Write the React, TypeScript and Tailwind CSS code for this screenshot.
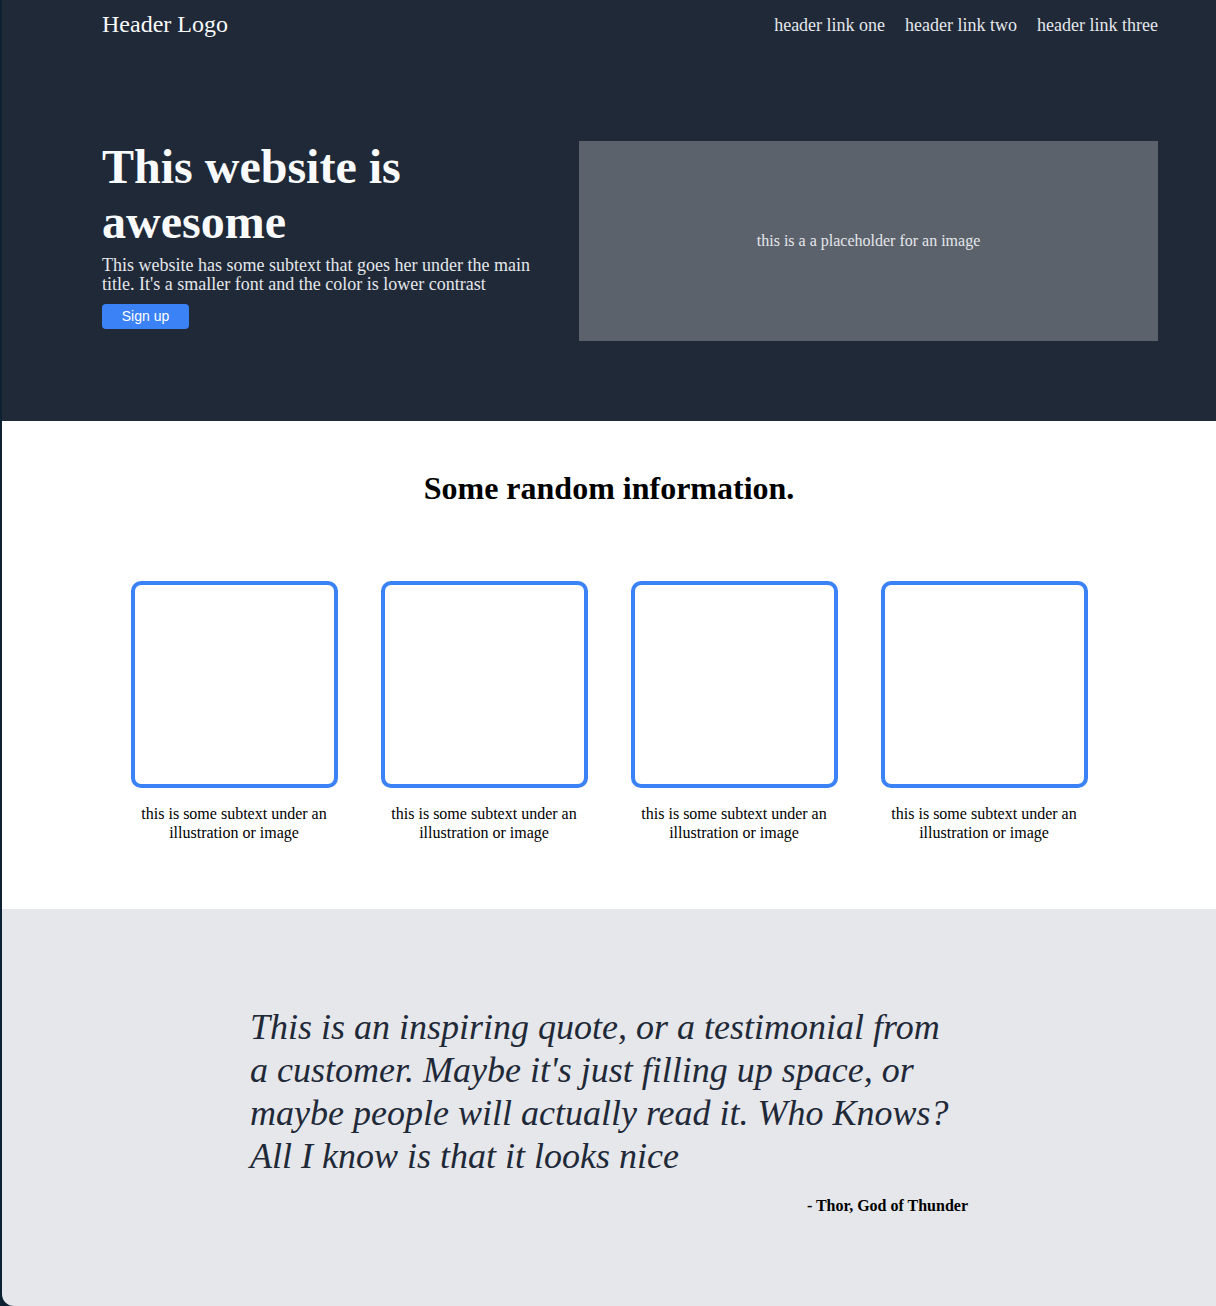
const serif = "font-['Liberation_Serif','Times_New_Roman',serif]";

const cards = [1, 2, 3, 4];

export default function App() {
  return (
    <div className={`min-h-[1306px] bg-[#0c2131] pl-[2px] ${serif}`}>
      <div className="overflow-hidden rounded-bl-[12px]">
        <section className="h-[421px] bg-[#1f2937] text-gray-50">
          <nav className="flex items-center justify-between pl-[100px] pr-[58px] pt-[8px]">
            <div className="text-[24px] leading-[32px]">Header Logo</div>
            <div className="flex gap-[20px] pt-[2px] text-[18px] text-gray-200">
              <a>header link one</a>
              <a>header link two</a>
              <a>header link three</a>
            </div>
          </nav>
          <div className="mt-[101px] flex items-start gap-[21px] pl-[100px] pr-[58px]">
            <div className="-mt-[2px] w-[456px]">
              <h1 className="text-[48px] font-bold leading-[55px]">This website is awesome</h1>
              <p className="mt-[7px] text-[18px] leading-[19px] text-gray-200">
                This website has some subtext that goes her under the main title. It's a smaller font and
                the color is lower contrast
              </p>
              <button className="mt-[10px] h-[25px] w-[87px] rounded-[4px] bg-[#3b82f6] font-['Liberation_Sans',Arial,sans-serif] text-[14px] font-medium text-white">
                Sign up
              </button>
            </div>
            <div className="flex h-[200px] flex-1 items-center justify-center bg-[#5b626c] text-[16px] text-gray-200">
              this is a a placeholder for an image
            </div>
          </div>
        </section>

        <section className="h-[488px] bg-white pt-[48px] text-black">
          <h2 className="text-center text-[32px] font-bold leading-[1.2]">Some random information.</h2>
          <div className="mt-[74px] flex justify-center gap-[43px]">
            {cards.map((c) => (
              <div key={c} className="w-[207px]">
                <div className="h-[207px] w-[207px] rounded-[10px] border-4 border-[#3b82f6]" />
                <p className="mt-[16px] px-2 text-center text-[16px] leading-[19px]">
                  this is some subtext under an illustration or image
                </p>
              </div>
            ))}
          </div>
        </section>

        <section className="h-[397px] bg-[#e5e7eb] pt-[97px]">
          <div className="mx-auto w-[718px]">
            <p className="w-[700px] text-[36px] italic leading-[43px] text-[#1f2937]">
              This is an inspiring quote, or a testimonial from a customer. Maybe it's just filling up
              space, or maybe people will actually read it. Who Knows? All I know is that it looks nice
            </p>
            <p className="mt-[16px] text-right text-[16px] font-bold text-black">- Thor, God of Thunder</p>
          </div>
        </section>
      </div>
    </div>
  );
}
